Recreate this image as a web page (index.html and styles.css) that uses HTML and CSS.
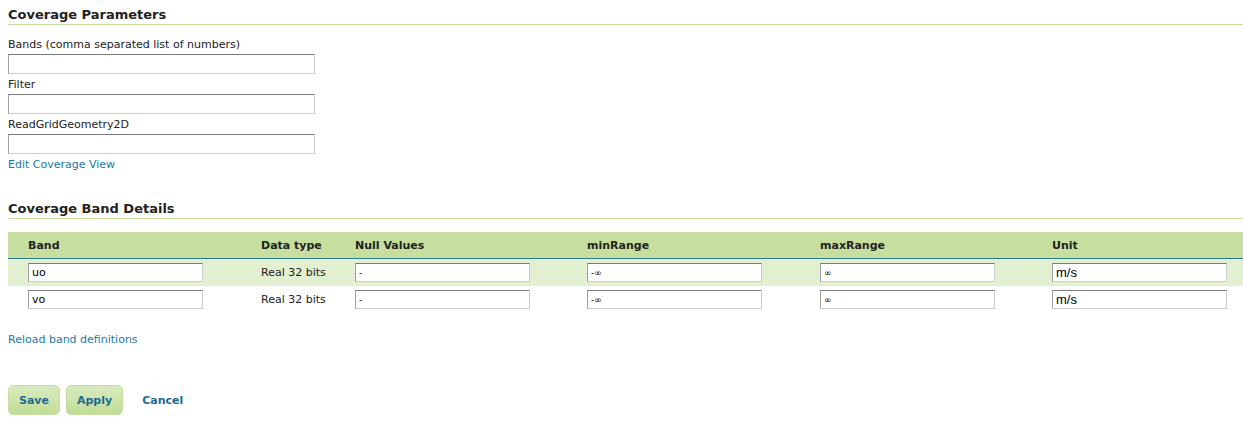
FILE: index.html
```html
<!DOCTYPE html>
<html lang="en">
<head>
    <meta charset="UTF-8">
    <title>Coverage Parameters</title>
    <link rel="stylesheet" href="styles.css">
</head>
<body>
    <h3 class="section-title">Coverage Parameters</h3>
    <ul class="param-list">
        <li>
            <label>Bands (comma separated list of numbers)</label>
            <input type="text" class="field">
        </li>
        <li>
            <label>Filter</label>
            <input type="text" class="field">
        </li>
        <li>
            <label>ReadGridGeometry2D</label>
            <input type="text" class="field">
        </li>
    </ul>
    <a href="#" class="link">Edit Coverage View</a>

    <h3 class="section-title band-title">Coverage Band Details</h3>
    <table class="bands">
        <thead>
            <tr>
                <th class="col-band">Band</th>
                <th class="col-type">Data type</th>
                <th class="col-null">Null Values</th>
                <th class="col-min">minRange</th>
                <th class="col-max">maxRange</th>
                <th class="col-unit">Unit</th>
            </tr>
        </thead>
        <tbody>
            <tr class="odd">
                <td><input type="text" class="cell-input" value="uo"></td>
                <td>Real 32 bits</td>
                <td><input type="text" class="cell-input small" value="-"></td>
                <td><input type="text" class="cell-input small" value="-∞"></td>
                <td><input type="text" class="cell-input small" value="∞"></td>
                <td><input type="text" class="cell-input unit" value="m/s"></td>
            </tr>
            <tr>
                <td><input type="text" class="cell-input" value="vo"></td>
                <td>Real 32 bits</td>
                <td><input type="text" class="cell-input small" value="-"></td>
                <td><input type="text" class="cell-input small" value="-∞"></td>
                <td><input type="text" class="cell-input small" value="∞"></td>
                <td><input type="text" class="cell-input unit" value="m/s"></td>
            </tr>
        </tbody>
    </table>
    <a href="#" class="link reload">Reload band definitions</a>

    <div class="buttons">
        <button class="btn">Save</button>
        <button class="btn">Apply</button>
        <a href="#" class="cancel">Cancel</a>
    </div>
</body>
</html>
```

FILE: styles.css
```css
body {
    margin: 0;
    padding: 0 0 0 8px;
    font-family: "DejaVu Sans", Verdana, sans-serif;
    font-size: 11px;
    color: #222;
    background: #fff;
}
.section-title {
    margin: 0;
    padding: 7px 0 2px 0;
    font-size: 13px;
    font-weight: bold;
    color: #222;
    border-bottom: 1px solid #c5df9f;
}
.band-title {
    margin-top: 22px;
}
.param-list {
    list-style: none;
    margin: 0;
    padding: 13px 0 0 0;
}
.param-list li {
    display: flex;
    flex-direction: column;
    align-items: flex-start;
}
.param-list label {
    height: 16px;
    line-height: 14px;
}
.field {
    width: 307px;
    height: 20px;
    box-sizing: border-box;
    margin: 0 0 4px 0;
    border: 1px solid #ccc;
    border-top-color: #7b7b7b;
    border-left-color: #a0a0a0;
    padding: 1px 3px;
}
.link {
    display: block;
    color: #1a7aa5;
    text-decoration: none;
    line-height: 14px;
}
.bands {
    margin-top: 13px;
    width: 100%;
    border-collapse: collapse;
    table-layout: fixed;
}
.bands th {
    background: #c7df9e;
    text-align: left;
    font-weight: bold;
    font-size: 11px;
    height: 26px;
    padding: 0;
    border-bottom: 1px solid #2b7a87;
}
.bands td {
    padding: 0;
    height: 27px;
}
.bands tr.odd td {
    background: #e2efd0;
}
.bands th:first-child,
.bands td:first-child {
    padding-left: 20px;
}
.col-band { width: 233px; }
.col-type { width: 94px; }
.col-null { width: 232px; }
.col-min { width: 233px; }
.col-max { width: 232px; }
.cell-input {
    box-sizing: border-box;
    width: 175px;
    height: 19px;
    border: 1px solid #ccc;
    border-top-color: #7b7b7b;
    border-left-color: #a0a0a0;
    padding: 0 3px;
    font-family: "DejaVu Sans", Verdana, sans-serif;
    font-size: 11px;
    color: #000;
    display: block;
}
.cell-input.small {
    font-size: 9px;
}
.cell-input.unit {
    font-family: "Liberation Sans", Arial, sans-serif;
    font-size: 13px;
}
.reload {
    margin-top: 20px;
}
.buttons {
    display: flex;
    align-items: center;
    gap: 6px;
    margin-top: 38px;
}
.btn {
    height: 30px;
    padding: 0 10px;
    border: 1px solid #c5dea0;
    border-radius: 5px;
    background: linear-gradient(#d9ebbe, #c1dd98);
    color: #1c6a8f;
    font-family: "DejaVu Sans", Verdana, sans-serif;
    font-size: 11px;
    font-weight: bold;
}
.cancel {
    margin-left: 13px;
    color: #1c6a8f;
    font-weight: bold;
    text-decoration: none;
}
```
